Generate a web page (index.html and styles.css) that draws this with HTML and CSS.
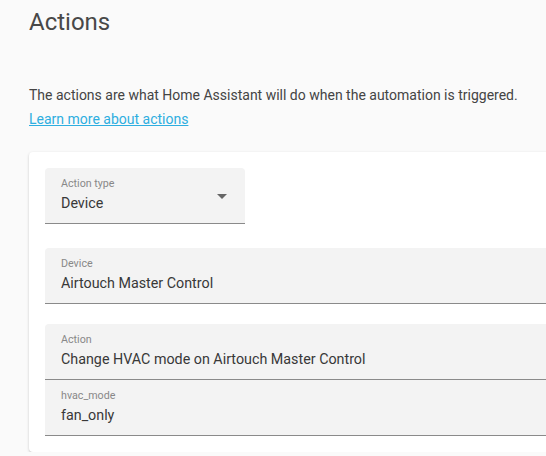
FILE: index.html
```html
<!DOCTYPE html>
<html>
<head>
<meta charset="utf-8">
<link rel="stylesheet" href="styles.css">
</head>
<body>
<div class="page">
  <h1 class="title">Actions</h1>
  <p class="desc">The actions are what Home Assistant will do when the automation is triggered.<br><a class="link" href="#">Learn more about actions</a></p>
  <div class="card">
    <div class="field select">
      <div class="label">Action type</div>
      <div class="value">Device</div>
      <span class="arrow"></span>
    </div>
    <div class="field wide gap1">
      <div class="label">Device</div>
      <div class="value">Airtouch Master Control</div>
    </div>
    <div class="group">
      <div class="field wide">
        <div class="label">Action</div>
        <div class="value">Change HVAC mode on Airtouch Master Control</div>
      </div>
      <div class="field wide flat">
        <div class="label">hvac_mode</div>
        <div class="value">fan_only</div>
      </div>
    </div>
  </div>
</div>
</body>
</html>
```
FILE: styles.css
```css
html, body {
  margin: 0;
  padding: 0;
  background: #fafafa;
  overflow: hidden;
  font-family: Roboto, "Liberation Sans", sans-serif;
}
.page {
  padding: 6px 0 0 29px;
  width: 600px;
}
.title {
  margin: 0;
  font-size: 24px;
  line-height: 32px;
  font-weight: 400;
  color: #484848;
}
.desc {
  margin: 45px 0 0;
  font-size: 14px;
  line-height: 24px;
  color: #444;
}
.link {
  color: #2eaee0;
  text-decoration: underline;
}
.card {
  margin-top: 21px;
  background: #fff;
  border-radius: 4px;
  box-shadow: 0 1px 3px rgba(0,0,0,0.18), 0 1px 1px rgba(0,0,0,0.06);
  padding: 16px 16px 16px 16px;
  width: 600px;
}
.field {
  position: relative;
  height: 55px;
  background: #f3f3f3;
  border-bottom: 1px solid #8a8a8a;
  border-radius: 4px 4px 0 0;
  padding: 0 16px;
  box-sizing: content-box;
}
.select {
  width: 168px;
}
.gap1 {
  margin-top: 24px;
}
.group {
  margin-top: 20px;
}
.flat {
  border-radius: 0;
}
.label {
  padding-top: 10px;
  font-size: 10.7px;
  line-height: 12px;
  color: #888;
}
.value {
  margin-top: 3px;
  font-size: 14.3px;
  line-height: 20px;
  color: #383838;
}
.arrow {
  position: absolute;
  right: 18px;
  top: 26px;
  width: 0;
  height: 0;
  border-left: 5px solid transparent;
  border-right: 5px solid transparent;
  border-top: 5px solid #666;
}
```
